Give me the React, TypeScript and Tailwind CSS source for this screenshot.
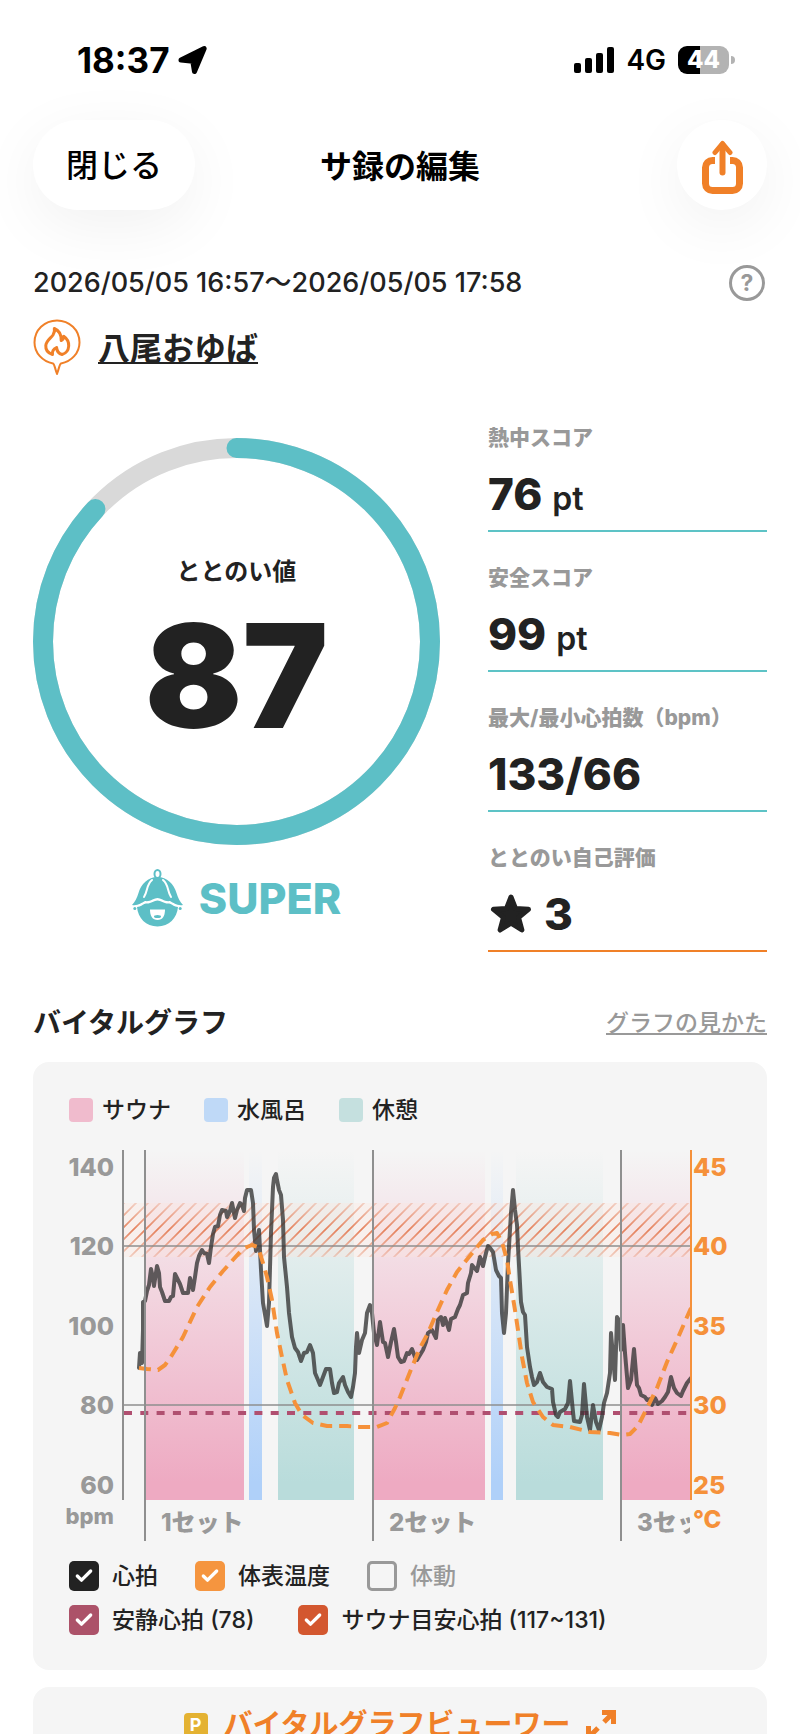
// src/pages/RecordEdit/App.tsx
import type { ReactNode } from 'react';
import { Check } from 'lucide-react';

// ─────────────────────────────────────────────────────────────────────────────
// Static data
// ─────────────────────────────────────────────────────────────────────────────

const SCORE = 87;

type Phase = 'sauna' | 'water' | 'rest';

const LEGEND = [
  { label: 'サウナ', swatch: 'bg-[#f0bbcd]' },
  { label: '水風呂', swatch: 'bg-[#bfd9f7]' },
  { label: '休憩',   swatch: 'bg-[#c5e0df]' },
];

const BANDS: { phase: Phase; x: number; w: number }[] = [
  { phase: 'sauna', x: 112, w: 99 },
  { phase: 'water', x: 216, w: 13 },
  { phase: 'rest',  x: 245, w: 76 },
  { phase: 'sauna', x: 341, w: 111 },
  { phase: 'water', x: 458, w: 12 },
  { phase: 'rest',  x: 483, w: 87 },
  { phase: 'sauna', x: 589, w: 69 },
];

const SETS = [
  { label: '1セット', x: 112 },
  { label: '2セット', x: 340 },
  { label: '3セット', x: 588 },
];

// y positions share the same ticks on both axes
const TICKS = [
  { y: 17,  bpm: '140', temp: '45' },
  { y: 96,  bpm: '120', temp: '40' },
  { y: 176, bpm: '100', temp: '35' },
  { y: 255, bpm: '80',  temp: '30' },
  { y: 335, bpm: '60',  temp: '25' },
];

const HEART_POINTS =
  '106,218 107,203 109,213 110,180 110,152 112,151 114,141 116,135 118,119 120,128 121,136 124,116 126,123 127,137 ' +
  '129,142 132,151 136,151 138,147 140,146 142,124 144,128 147,134 150,143 155,143 157,128 160,140 162,127 164,113 ' +
  '166,106 169,100 171,103 174,104 176,113 178,97 180,84 182,77 185,76 187,65 189,60 193,61 194,67 197,61 199,53 ' +
  '202,68 204,60 207,53 209,55 211,61 212,48 214,40 218,40 220,53 221,80 223,101 226,80 228,120 230,153 234,176 ' +
  '236,153 238,83 240,37 241,28 243,24 244,30 246,40 248,45 250,70 251,107 254,137 256,163 259,187 262,198 265,202 ' +
  '268,211 271,203 274,202 277,195 280,203 282,223 285,230 287,235 290,227 293,219 297,219 299,233 301,243 304,242 ' +
  '306,233 310,227 312,235 315,242 318,247 320,237 322,223 323,197 324,183 326,203 329,190 332,183 334,163 337,155 ' +
  '339,163 341,183 344,195 347,172 350,192 352,193 355,207 358,192 361,179 363,192 365,207 368,212 371,211 374,203 ' +
  '376,204 379,199 382,207 384,210 387,205 390,200 393,192 395,183 399,180 403,188 405,170 408,167 410,175 412,168 ' +
  '416,180 418,169 422,167 425,159 427,155 430,145 434,143 435,133 438,123 439,115 444,121 447,107 450,116 453,103 ' +
  '455,96 457,98 460,102 463,120 466,126 468,128 469,163 471,183 473,163 475,113 478,63 480,40 482,60 484,75 485,97 ' +
  '488,152 490,162 492,165 494,197 497,217 499,227 501,235 504,232 507,223 510,232 514,237 519,239 520,252 523,265 ' +
  '525,267 527,262 532,259 535,253 537,231 540,262 541,271 547,272 549,265 551,234 554,267 557,280 560,255 563,272 ' +
  '566,280 569,267 571,253 574,243 577,223 578,183 582,230 584,167 586,170 588,200 590,175 592,203 595,238 598,230 ' +
  '601,199 604,235 606,238 608,245 612,247 614,250 618,249 619,255 622,248 625,254 629,251 632,247 635,242 638,227 ' +
  '641,238 644,243 648,246 650,241 654,233 658,228';

const TEMP_POINTS =
  '106,218 114,219 125,220 132,215 139,205 150,187 164,157 177,137 190,121 207,102 214,97 219,95 225,97 230,113 ' +
  '234,127 239,150 244,183 249,207 254,230 262,253 269,265 280,273 294,276 314,276 325,277 344,277 354,273 362,258 ' +
  '367,247 377,222 387,198 395,183 404,162 414,140 424,122 440,102 450,90 459,84 464,83 469,92 474,110 477,130 ' +
  '482,160 489,207 494,233 500,252 510,267 520,275 537,277 557,282 577,283 589,285 597,284 605,276 614,258 624,238 ' +
  '634,212 644,190 654,167 658,158';

// ─────────────────────────────────────────────────────────────────────────────
// Icons
// ─────────────────────────────────────────────────────────────────────────────

function LocationArrow() {
  return (
    <svg width="30" height="30" viewBox="0 0 30 30" aria-hidden="true">
      <path
        d="M26.200 3.500 16.500 26.500 14.800 16.300 3 15Z"
        fill="#000"
        stroke="#000"
        strokeWidth="5"
        strokeLinejoin="round"
      />
    </svg>
  );
}

function SignalBars() {
  return (
    <svg width="40" height="26" viewBox="0 0 40 26" aria-hidden="true">
      <rect x="0" y="16" width="7" height="10" rx="2" />
      <rect x="11" y="11" width="7" height="15" rx="2" />
      <rect x="22" y="6" width="7" height="20" rx="2" />
      <rect x="33" y="0" width="7" height="26" rx="2" />
    </svg>
  );
}

function ShareIcon() {
  return (
    <svg width="43" height="54" viewBox="0 0 43 54" fill="none" stroke="#f08028" aria-hidden="true">
      <path d="M14 20.500H11.500a7 7 0 0 0-7 7V43.500a7 7 0 0 0 7 7h20a7 7 0 0 0 7-7V27.500a7 7 0 0 0-7-7H29" strokeWidth="7" />
      <path d="M21.500 32.500V5" strokeWidth="6" strokeLinecap="round" />
      <path d="M14 12.500 21.500 3.500l7.500 9" strokeWidth="5" strokeLinecap="round" strokeLinejoin="round" />
    </svg>
  );
}

function SaunaPin() {
  return (
    <svg width="48" height="56" viewBox="0 0 48 56" fill="none" stroke="#f08028" strokeLinejoin="round" aria-hidden="true">
      <path
        d="M20 44.500C9.500 42.500 1.500 34 1.500 23.500 1.500 11 11.500 1.500 24 1.500S46.500 11 46.500 23.500C46.500 34 38.500 42.500 28 44.500 26.500 45 26.500 48 24 55 21.500 48 21.500 45 20 44.500Z"
        strokeWidth="2"
      />
      <path
        d="M19.500 35.500C15 34 12.500 30.500 12.800 26.500 13.100 22 17.500 19.500 20 16 21.500 13.700 21.800 11.500 21.300 9.500 26 11.500 28.500 15.500 28.200 21.500 30 20.800 30.700 19 30.700 17.200 34 19.500 36 23 35.700 27 35.400 31.500 32.500 34.500 29 35.500 26.500 35 24 33 23.600 28.500 20.500 30 19 32.500 19.500 35.500Z"
        strokeWidth="3"
      />
    </svg>
  );
}

function SaunaHatFace() {
  return (
    <svg width="51" height="58" viewBox="0 0 51 58" aria-hidden="true">
      <ellipse cx="25.500" cy="5" rx="3" ry="4" fill="none" stroke="#5dbfc6" strokeWidth="2" />
      <path
        d="M25.500 8C35 8 42 15 44.500 24 46 29 48 33 51 36 45 37 42 34 38 32 33 33 29 29 25.500 29S18 33 13 32C9 34 6 37 0 36 3 33 5 29 6.500 24 9 15 16 8 25.500 8Z"
        fill="#5dbfc6"
      />
      <path d="M20 11C14 16 16 22 12 28M31 11C37 16 35 22 39 28" fill="none" stroke="#fff" strokeWidth="2" strokeLinecap="round" />
      <path
        d="M5 38C9 38 11 35 14 34.500 19 35 22 31.500 25.500 31.500S32 35 37 34.500C40 35 42 38 46 38 45 49 37 57.500 25.500 57.500S6 49 5 38Z"
        fill="#5dbfc6"
      />
      <circle cx="2.800" cy="39.500" r="1.500" fill="#5dbfc6" />
      <circle cx="48.200" cy="39.500" r="1.500" fill="#5dbfc6" />
      <path d="M18 40.500H33C33 47 30.500 51 25.500 51S18 47 18 40.500Z" fill="#fff" />
      <ellipse cx="25.500" cy="47.500" rx="3.500" ry="1.500" fill="#5dbfc6" />
    </svg>
  );
}

function StarIcon() {
  return (
    <svg width="42" height="40" viewBox="0 0 42 40" aria-hidden="true">
      <path
        d="M21 3 25.500 14.500 38.500 15.300 28.500 23.500 31.900 36 21 29.200 10.100 36 13.500 23.500 3.500 15.300 16.500 14.500Z"
        fill="#222"
        stroke="#222"
        strokeWidth="5"
        strokeLinejoin="round"
      />
    </svg>
  );
}

function ExpandIcon() {
  return (
    <svg width="30" height="30" viewBox="0 0 30 30" fill="none" stroke="#f08028" strokeWidth="5" aria-hidden="true">
      <path d="M16 2.500H27.500V14M27 3 18 12M14 27.500H2.500V16M3 27 12 18" />
    </svg>
  );
}

// ─────────────────────────────────────────────────────────────────────────────
// Header
// ─────────────────────────────────────────────────────────────────────────────

function StatusBar() {
  return (
    <div className="flex h-10 items-center justify-between pr-8 pl-11 text-black">
      <div className="flex items-center gap-2">
        <span className="text-[35px] leading-10 font-bold">18:37</span>
        <LocationArrow />
      </div>
      <div className="flex items-center gap-3">
        <SignalBars />
        <span className="text-[28px] leading-10 font-semibold">4G</span>
        <div className="flex items-center gap-0.5">
          <div className="flex h-7 w-[51px] items-center justify-center rounded-[9px] bg-linear-to-r from-black from-44% to-[#b3b3b3] to-44% text-[24px] leading-7 font-extrabold text-white">
            44
          </div>
          <div className="h-2 w-1 rounded-r-full bg-[#b3b3b3]" />
        </div>
      </div>
    </div>
  );
}

function NavBar() {
  return (
    <header className="mt-10 grid h-[90px] grid-cols-[1fr_auto_1fr] items-center text-black">
      <button
        type="button"
        className="h-[90px] w-[162px] rounded-full bg-white pt-0.5 text-[32px] font-medium shadow-[0_16px_64px_rgba(0,0,0,0.06)]"
      >
        閉じる
      </button>
      <h1 className="pt-1 text-[32px] leading-10 font-bold">サ録の編集</h1>
      <button
        type="button"
        aria-label="共有"
        className="flex size-[90px] items-center justify-center justify-self-end rounded-full bg-white pt-1 shadow-[0_16px_64px_rgba(0,0,0,0.06)]"
      >
        <ShareIcon />
      </button>
    </header>
  );
}

// ─────────────────────────────────────────────────────────────────────────────
// Scores
// ─────────────────────────────────────────────────────────────────────────────

function ScoreRing() {
  return (
    <div className="relative">
      <svg viewBox="0 0 407 407" className="block w-full" fill="none" strokeWidth="20" aria-hidden="true">
        <circle cx="203.500" cy="203.500" r="193.500" stroke="#d9d9d9" />
        <circle
          cx="203.500"
          cy="203.500"
          r="193.500"
          stroke="#5dbfc6"
          strokeLinecap="round"
          pathLength="100"
          strokeDasharray={`${SCORE} 100`}
          transform="rotate(-90 203.500 203.500)"
        />
      </svg>
      <div className="absolute inset-0 flex flex-col items-center justify-center pt-5">
        <span className="text-[24px] leading-8 font-bold">ととのい値</span>
        <span className="mt-4 text-[144px] leading-[144px] font-black">{SCORE}</span>
      </div>
    </div>
  );
}

function Stat({ label, accent = false, children }: { label: string; accent?: boolean; children: ReactNode }) {
  return (
    <div className={`border-b-2 pb-[9px] ${accent ? 'border-[#f08028]' : 'border-[#5dc3c6]'}`}>
      <dt className="text-[21px] leading-[30px] font-extrabold text-[#999]">{label}</dt>
      <dd className="mt-3.5 flex h-[54px] items-center text-[44px] leading-[54px] font-extrabold">{children}</dd>
    </div>
  );
}

function Points({ value }: { value: number }) {
  return (
    <span className="flex items-baseline gap-2.5">
      {value}
      <span className="text-[32px] leading-none font-semibold">pt</span>
    </span>
  );
}

function Scores() {
  return (
    <section className="mt-12 grid grid-cols-[407fr_279fr] gap-12">
      <div className="pt-[15px]">
        <ScoreRing />
        <div className="mt-6 flex items-center justify-center gap-4 text-[#5dbfc6]">
          <SaunaHatFace />
          <span className="text-[43px] leading-[58px] font-extrabold">SUPER</span>
        </div>
      </div>
      <dl className="flex flex-col gap-[31px]">
        <Stat label="熱中スコア"><Points value={76} /></Stat>
        <Stat label="安全スコア"><Points value={99} /></Stat>
        <Stat label="最大/最小心拍数（bpm）">133/66</Stat>
        <Stat label="ととのい自己評価" accent>
          <span className="flex items-center gap-3 pl-0.5">
            <StarIcon />3
          </span>
        </Stat>
      </dl>
    </section>
  );
}

// ─────────────────────────────────────────────────────────────────────────────
// Vital chart
// ─────────────────────────────────────────────────────────────────────────────

function VitalChart() {
  return (
    <svg viewBox="0 0 734 392" className="mt-6 block w-full" role="img" aria-label="バイタルグラフ">
      <defs>
        <linearGradient id="sauna" x1="0" y1="0" x2="0" y2="1">
          <stop offset="0" stopColor="#eeaac2" stopOpacity="0" />
          <stop offset="0.95" stopColor="#eeaac2" />
        </linearGradient>
        <linearGradient id="water" x1="0" y1="0" x2="0" y2="1">
          <stop offset="0" stopColor="#afd0f9" stopOpacity="0" />
          <stop offset="0.95" stopColor="#afd0f9" />
        </linearGradient>
        <linearGradient id="rest" x1="0" y1="0" x2="0" y2="1">
          <stop offset="0" stopColor="#b9dcdb" stopOpacity="0" />
          <stop offset="0.95" stopColor="#b9dcdb" />
        </linearGradient>
        <linearGradient id="hatchFade" x1="0" y1="0" x2="0" y2="1">
          <stop offset="0" stopColor="#fff" stopOpacity="0.300" />
          <stop offset="0.5" stopColor="#fff" />
          <stop offset="1" stopColor="#fff" stopOpacity="0.300" />
        </linearGradient>
        <pattern id="hatch" width="12" height="12" patternUnits="userSpaceOnUse">
          <path d="M-2 14 14-2M-2 2 2-2M10 14 14 10" stroke="#e5815c" strokeWidth="1.700" />
        </pattern>
        <mask id="hatchMask">
          <rect x="90" y="53" width="568" height="54" fill="url(#hatchFade)" />
        </mask>
        <clipPath id="plot">
          <rect x="90" y="0" width="567" height="392" />
        </clipPath>
      </defs>

      <g clipPath="url(#plot)">
        {BANDS.map((b) => (
          <rect key={b.x} x={b.x} y="0" width={b.w} height="350" fill={`url(#${b.phase})`} />
        ))}

        {/* target heart rate zone */}
        <rect x="90" y="53" width="568" height="54" fill="#ffe3d9" fillOpacity="0.300" />
        <rect x="90" y="53" width="568" height="54" fill="url(#hatch)" mask="url(#hatchMask)" />

        <path d="M91 96H658M91 255H658" stroke="#8f8f8f" strokeWidth="1.500" />
        <path d="M91 263H658" stroke="#b04f70" strokeWidth="4" strokeDasharray="8 8.300" />

        <polyline points={HEART_POINTS} fill="none" stroke="#333" strokeOpacity="0.780" strokeWidth="4" strokeLinejoin="round" strokeLinecap="round" />
        <polyline points={TEMP_POINTS} fill="none" stroke="#f5913a" strokeWidth="4" strokeLinejoin="round" strokeDasharray="12 7" />

        {SETS.map((s) => (
          <g key={s.label}>
            <path d={`M${s.x} 0V391`} stroke="#8f8f8f" strokeWidth="2" />
            <text x={s.x + 16} y="381" fontSize="24" fontWeight="800" fill="#999">{s.label}</text>
          </g>
        ))}
      </g>

      <path d="M90 0V350" stroke="#8f8f8f" strokeWidth="2" />
      <path d="M658 0V350" stroke="#f5913a" strokeWidth="2" />

      {TICKS.map((t) => (
        <g key={t.y} fontSize="25" fontWeight="800">
          <text x="81" y={t.y + 9} textAnchor="end" fill="#999">{t.bpm}</text>
          <text x="660" y={t.y + 9} fill="#f5913a">{t.temp}</text>
        </g>
      ))}
      <text x="81" y="374" textAnchor="end" fontSize="22" fontWeight="800" fill="#999">bpm</text>
      <text x="660" y="378" fontSize="24" fontWeight="800" fill="#f5913a">°C</text>
    </svg>
  );
}

function SeriesToggle({ label, color, checked = true }: { label: string; color: string; checked?: boolean }) {
  return (
    <label className={`flex items-center gap-[13px] text-[23px] leading-[30px] font-medium ${checked ? '' : 'text-[#999]'}`}>
      <span className="grid size-[30px]">
        <input
          type="checkbox"
          defaultChecked={checked}
          className={`col-start-1 row-start-1 size-[30px] appearance-none rounded-[5px] ${color}`}
        />
        {checked && (
          <Check size={20} strokeWidth={4} className="pointer-events-none col-start-1 row-start-1 place-self-center text-white" />
        )}
      </span>
      {label}
    </label>
  );
}

function VitalCard() {
  return (
    <div className="mt-[21px] rounded-2xl bg-[#f5f5f5] pt-8 pb-[35px]">
      <ul className="flex h-8 items-center gap-[33px] pl-9">
        {LEGEND.map((item) => (
          <li key={item.label} className="flex items-center gap-[9px] text-[23px] leading-8 font-medium">
            <span className={`size-6 rounded ${item.swatch}`} />
            {item.label}
          </li>
        ))}
      </ul>

      <VitalChart />

      <div className="mt-[19px] flex flex-col gap-3.5 pl-9">
        <div className="flex gap-[37px]">
          <SeriesToggle label="心拍" color="bg-[#222]" />
          <SeriesToggle label="体表温度" color="bg-[#f5953f]" />
          <SeriesToggle label="体動" color="border-3 border-[#999]" checked={false} />
        </div>
        <div className="flex gap-11">
          <SeriesToggle label="安静心拍 (78)" color="bg-[#ac5269]" />
          <SeriesToggle label="サウナ目安心拍 (117~131)" color="bg-[#d3572f]" />
        </div>
      </div>
    </div>
  );
}

// ─────────────────────────────────────────────────────────────────────────────

export default function App() {
  return (
    <div
      lang="ja"
      className="h-screen overflow-hidden bg-white px-[33px] pt-10 font-['Inter','Noto_Sans_CJK_JP',sans-serif] text-[#222]"
    >
      <StatusBar />
      <NavBar />

      <main>
        {/* ── Visit ─────────────────────────────────────────────────────── */}
        <div className="mt-[53px] flex h-10 items-center justify-between">
          <p className="text-[27px] leading-10 font-medium">2026/05/05 16:57～2026/05/05 17:58</p>
          <button
            type="button"
            aria-label="ヘルプ"
            className="mr-0.5 flex size-9 items-center justify-center rounded-full border-3 border-[#999] text-[23px] leading-none font-bold text-[#999]"
          >
            ?
          </button>
        </div>
        <div className="mt-4 flex h-14 items-center gap-[17px]">
          <SaunaPin />
          <a href="#facility" className="pt-1 text-[32px] leading-10 font-bold underline decoration-2 underline-offset-2">八尾おゆば</a>
        </div>

        <Scores />

        {/* ── Vital graph ───────────────────────────────────────────────── */}
        <div className="mt-[53px] flex h-9 items-center justify-between">
          <h2 className="text-[28px] leading-9 font-bold">バイタルグラフ</h2>
          <a href="#guide" className="text-[23px] leading-9 font-medium text-[#999] underline decoration-2 underline-offset-2">グラフの見かた</a>
        </div>
        <VitalCard />

        <button
          type="button"
          className="mt-[17px] flex w-full items-center justify-center gap-4 rounded-2xl bg-[#f5f5f5] py-5 text-[29px] leading-9 font-bold text-[#f08028]"
        >
          <span className="flex size-6 items-center justify-center rounded bg-[#e4b232] text-[18px] leading-6 text-white">P</span>
          バイタルグラフビューワー
          <ExpandIcon />
        </button>
      </main>
    </div>
  );
}
